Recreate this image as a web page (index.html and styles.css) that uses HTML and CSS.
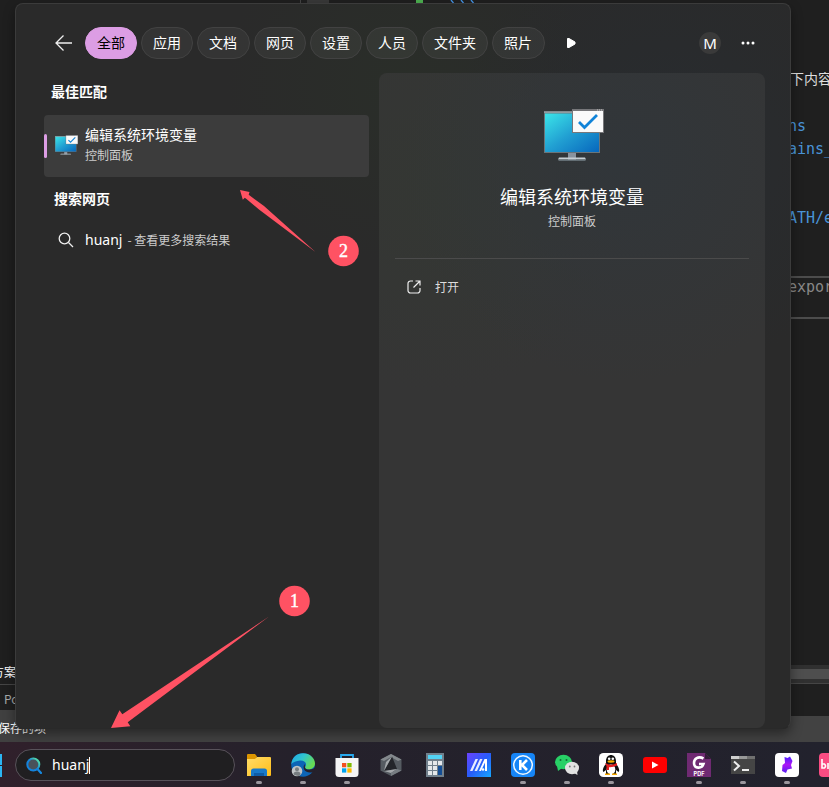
FILE: index.html
```
<!DOCTYPE html>
<html lang="zh-CN">
<head>
<meta charset="utf-8">
<title>Search</title>
<link rel="stylesheet" href="styles.css">
</head>
<body>
<div class="desktop">
  <div class="editor">
    <div class="editor-top"><i class="tick"></i><i class="block"></i><i class="cursor"></i><svg class="fence" viewBox="0 0 26 4"><path d="M1 0l2.500 3M11 0l2.500 3M21 0l2.500 3"/></svg></div>
    <div class="code">
      <p class="plain">下内容</p>
      <p class="blue l1">ns</p>
      <p class="blue l2">ains_</p>
      <p class="blue l3">ATH/e</p>
      <p class="snippet">export</p>
    </div>
    <div class="panel-right"><i class="scroll"></i><i class="rest"></i><i class="foot"></i></div>
    <div class="panel-left">
      <p class="solution">方案</p>
      <p class="ps">Po</p>
      <p class="status">保存的项</p>
    </div>
  </div>

  <main class="search">
    <header class="tabs">
      <svg class="back" viewBox="0 0 18 18"><path d="M17 9H1.500M8.500 1.500L1 9l7.500 7.500"/></svg>
      <span class="tab active">全部</span><span class="tab">应用</span><span class="tab wide">文档</span><span class="tab">网页</span><span class="tab">设置</span><span class="tab">人员</span><span class="tab">文件夹</span><span class="tab wide">照片</span>
      <svg class="play" viewBox="0 0 10 12"><path d="M1.500 1.500v9h1.500L9 7V5L3 1.500z"/></svg>
      <span class="avatar">M</span>
      <svg class="dots" viewBox="0 0 14 4"><circle cx="2" cy="2" r="1.500"/><circle cx="7" cy="2" r="1.500"/><circle cx="12" cy="2" r="1.500"/></svg>
    </header>
    <div class="body">
      <section class="results">
        <h2>最佳匹配</h2>
        <div class="best">
          <svg class="monitor-s" viewBox="0 0 60 52"><use href="#monitor"/></svg>
          <div><p class="name">编辑系统环境变量</p><p class="kind">控制面板</p></div>
        </div>
        <h2 class="web">搜索网页</h2>
        <div class="query">
          <svg viewBox="0 0 16 16"><circle cx="6.500" cy="6.500" r="5.300"/><path d="M10.500 10.500L15 15"/></svg>
          <b>huanj</b><span>- 查看更多搜索结果</span>
        </div>
      </section>
      <section class="detail">
        <svg class="monitor-l" viewBox="0 0 60 52">
          <defs>
            <linearGradient id="screen" x1="0" y1="0" x2="1" y2="1"><stop offset="0" stop-color="#3be5e9"/><stop offset=".5" stop-color="#219fd2"/><stop offset="1" stop-color="#0767bd"/></linearGradient>
            <g id="monitor">
              <path fill="#89939e" d="M24 43h8v8h-8z"/><path fill="#c5ced3" d="M15 48.500h26l1 2H14z"/><path fill="#6f7c82" d="M14.500 50.500h27v1.300h-27z"/>
              <path fill="#6b757a" d="M0 2.500h56V44H0z"/><path fill="#b6c3c8" d="M0 2.500h56v1H0z"/><path fill="url(#screen)" d="M1 4.500h54V43H1z"/>
              <path fill="#77777a" d="M28 0h32v24H28z"/><path fill="#fafafa" d="M29 2h30v21H29z"/><path fill="none" stroke="#1083d8" stroke-width="2.800" d="M35 13l5.500 5.500L53 6"/>
              <path stroke="#ddd" stroke-width=".8" stroke-dasharray="1 1" d="M53 1h6"/>
            </g>
          </defs>
          <use href="#monitor"/>
        </svg>
        <h1>编辑系统环境变量</h1>
        <p class="sub">控制面板</p>
        <hr>
        <div class="open"><svg viewBox="0 0 14 14"><path d="M6 1H3.500A2.500 2.500 0 0 0 1 3.500v7A2.500 2.500 0 0 0 3.500 13h7a2.500 2.500 0 0 0 2.500-2.500V8M8.500 1H13v4.500M13 1L6.500 7.500"/></svg>打开</div>
      </section>
    </div>
  </main>

  <footer class="taskbar">
    <div class="start"><i></i><i></i></div>
    <div class="box">
      <svg viewBox="0 0 16 17"><defs><linearGradient id="ring" x1="0" y1="1" x2="1" y2="0"><stop offset=".5" stop-color="#1383dd"/><stop offset=".85" stop-color="#4fd6ac"/></linearGradient></defs><path d="M11.500 12l3.500 4" stroke="#1688df" stroke-width="2.200" stroke-linecap="round"/><circle cx="7.300" cy="7.500" r="6" fill="#49515a" stroke="url(#ring)" stroke-width="2"/></svg>
      <span>huanj</span><i class="caret"></i>
    </div>
    <div class="apps">
      <div class="app run"><svg viewBox="0 0 24 24"><defs><linearGradient id="fold" x1="0" y1="0" x2="1" y2="1"><stop stop-color="#ffdc69"/><stop offset="1" stop-color="#ffbd18"/></linearGradient></defs><path fill="#dc9500" d="M0 2q0-1 1-1h7l2 2.500-1 2.500H0z"/><path fill="url(#fold)" d="M0 6h8l2-2h13q1 0 1 1v17q0 1-1 1H0z"/><path fill="#1879c9" d="M4 23v-5q0-2.500 2.500-2.500h11Q20 15.500 20 18v5z"/><path fill="#0e5ca6" d="M7 20h10v3H7z"/></svg></div>
      <div class="app run"><svg viewBox="0 0 24 24"><defs><linearGradient id="edge" x1="0" y1="0" x2="1" y2=".5"><stop stop-color="#1ea5e8"/><stop offset=".5" stop-color="#30c6cf"/><stop offset="1" stop-color="#67db52"/></linearGradient></defs><circle cx="12" cy="12" r="11.800" fill="#0c65b6"/><path fill="url(#edge)" d="M.3 11C1 4 6 .2 12 .2c7 0 12 5 12 10.300 0 3.500-3 6-6.500 6-3 0-4-1.500-3-3 2-4-2-6.500-5.500-6C5 8 2 9 .3 11z"/><path fill="#25212b" d="M13.500 11c1 3-1 5.500 5 5.500 2.500 0 4-1 5.500-2v3c-1 1.500-3 2-5 2-5 0-8-4-5.500-8.500z"/><circle cx="6" cy="18" r="5.300" fill="#c1c5c7"/><circle cx="6" cy="16.300" r="2" fill="#777d80"/><path fill="#777d80" d="M2.500 21q0-2.500 3.500-2.500T9.500 21 6 22.800 2.500 21z"/></svg></div>
      <div class="app run"><svg viewBox="0 0 24 24"><path fill="none" stroke="#27a9ee" stroke-width="1.800" d="M6 6V2h12v4"/><path fill="#f5f5f5" d="M.5 5h23v15.500Q23.500 24 20 24H4Q.5 24 .5 20.500z"/><path fill="#f25022" d="M7 10h4.300v4.300H7z"/><path fill="#7fba00" d="M12.300 10h4.300v4.300h-4.300z"/><path fill="#00a4ef" d="M7 15.300h4.300v4.300H7z"/><path fill="#ffb900" d="M12.300 15.300h4.300v4.300h-4.300z"/></svg></div>
      <div class="app"><svg viewBox="0 0 24 24"><path fill="#555b61" d="M12 1l10.500 5.500v11L12 23 1.500 17.500v-11z"/><path fill="#84898d" d="M12 1l10.500 5.500L19 8 12 4 5 8 1.500 6.500z"/><path fill="#24262b" d="M13 3.500L18 16 5 18z"/><path fill="#a4a8ab" d="M13 3.500L5 18l2-9zM5 18l13-2-6 4z"/><path fill="#777d82" d="M18 16l4.500 1.500L12 23v-3z"/></svg></div>
      <div class="app"><svg viewBox="0 0 24 24"><path fill="#71808c" d="M3 0h18v24H3z"/><path fill="#52d3f5" d="M5 2h14v4H5z"/><path fill="#e4e8eb" d="M5 8h4v4H5zM10 8h4v4h-4zM15 8h4v4h-4zM5 13h4v4H5zM10 13h4v4h-4zM5 18h4v4H5zM10 18h4v4h-4z"/><path fill="#134d94" d="M15 13h4v9h-4z"/></svg></div>
      <div class="app"><svg viewBox="0 0 24 24"><defs><linearGradient id="ma" x1="0" y1="0" x2="1" y2="1"><stop stop-color="#6c42ff"/><stop offset=".5" stop-color="#285cf9"/><stop offset="1" stop-color="#16a8ff"/></linearGradient></defs><path fill="url(#ma)" d="M0 0h24v24H0z"/><path fill="#e8ecff" d="M3 18L8.500 6H11L5.500 18zM7.500 18L13 6h2.500L10 18z"/><path fill="#fff" d="M12 18l5.500-12H20v12h-2V9.500L14 18z"/><circle cx="16" cy="16.500" r="1.300" fill="#fff"/></svg></div>
      <div class="app run"><svg viewBox="0 0 24 24"><rect width="24" height="24" rx="4" fill="#1685f7"/><circle cx="12" cy="12" r="9.300" fill="none" stroke="#eff8ff" stroke-width="1.500"/><path fill="none" stroke="#fff" stroke-width="2.600" d="M9.300 7v10M16 7l-5 5 5 5"/></svg></div>
      <div class="app run"><svg viewBox="0 0 24 24"><ellipse cx="8.500" cy="9" rx="8.500" ry="7.200" fill="#28d066"/><path fill="#28d066" d="M2 13l1 5 4-3z"/><circle cx="5.500" cy="7" r="1" fill="#116d35"/><circle cx="11.500" cy="7" r="1" fill="#116d35"/><ellipse cx="17" cy="15" rx="7" ry="6.200" fill="#e2e2e2"/><path fill="#e2e2e2" d="M19 20l3.500 2-.5-4z"/><circle cx="14.800" cy="13.500" r=".9" fill="#777"/><circle cx="19.500" cy="13.500" r=".9" fill="#777"/></svg></div>
      <div class="app run"><svg viewBox="0 0 24 24"><rect width="24" height="24" rx="4.500" fill="#fff"/><path fill="#101010" d="M7 8c0-8 10-8 10 0v3c3 3 4 7 2.500 8L17 17v4H7v-4l-2.500 2C3 18 4 14 7 11z"/><ellipse cx="12" cy="16.500" rx="4.300" ry="5" fill="#fff"/><circle cx="10.200" cy="5.700" r="1.300" fill="#fff"/><circle cx="13.800" cy="5.700" r="1.300" fill="#fff"/><ellipse cx="12" cy="8.500" rx="3.500" ry="1.200" fill="#f6b100"/><path fill="#e22021" d="M6 10q6 3.500 12 0v2.500q-4 2-8 1.700V17H7.500v-4z"/><path fill="#f6a900" d="M6 20.500h5V22H6zM13 20.500h5V22h-5z"/></svg></div>
      <div class="app"><svg viewBox="0 0 24 24"><rect y="4" width="24" height="16" rx="3" fill="#f00"/><path fill="#fff" d="M9 8.500v7l6.500-3.500z"/></svg></div>
      <div class="app run"><svg viewBox="0 0 24 24"><path fill="#6f2a72" d="M0 0h18l6 6v18H0z"/><path fill="#8c478d" d="M24 6L3 18l8-5z"/><path fill="#331b37" d="M18 0v6h6z"/><path fill="none" stroke="#fff" stroke-width="2.600" d="M16.500 5.500C11 2.500 7 6 7 10c0 6 8 6 9.500 1H12"/><text x="12" y="22.500" fill="#fff" font-size="5.500" text-anchor="middle" class="pdf">PDF</text></svg></div>
      <div class="app run"><svg viewBox="0 0 24 24"><path fill="#454545" d="M0 3h24v18H0z"/><path fill="#cfcfcf" d="M0 3h8v3H0z"/><path fill="#989898" d="M8 3h8v3H8z"/><path fill="#707070" d="M16 3h8v3h-8z"/><path fill="none" stroke="#eee" stroke-width="2" d="M3 8.500l5 4.500-5 4.500M11 17h7"/></svg></div>
      <div class="app run"><svg viewBox="0 0 24 24"><defs><linearGradient id="bolt" x1="0" y1="0" x2="0" y2="1"><stop stop-color="#4a20ff"/><stop offset=".5" stop-color="#ac16f5"/><stop offset="1" stop-color="#5420f2"/></linearGradient></defs><rect width="24" height="24" rx="4" fill="#fff"/><path fill="url(#bolt)" d="M9.500 4l3 1L15 3.500l2.500 4.500-1.500 4 1 3.500-4.500 1L11 20l-4-2 .5-6L10 10z"/></svg></div>
      <div class="app last"><svg viewBox="0 0 24 24"><rect width="24" height="24" rx="4" fill="#fa4c82"/><path fill="none" stroke="#fff" stroke-width="1.600" d="M3 6v9h2.500q2-2 0-4H3M9 10v6"/></svg></div>
    </div>
  </footer>

  <svg class="marks" viewBox="0 0 829 787">
    <path d="M240 190L249.500 192l-.8 2.800L264 206 315.500 252 259 209.500 246.500 199l-1.700-1.200-2 2z"/>
    <path d="M111 728l8.500-17.700 2.800 4L269 616.500 127.700 722.300l2.600 4z"/>
    <circle cx="343.500" cy="251" r="15.300"/><circle cx="294.500" cy="601" r="15.300"/>
    <text x="343.500" y="257">2</text><text x="294.500" y="607">1</text>
  </svg>
</div>
</body>
</html>
```
FILE: styles.css
```
* { box-sizing: border-box; }
body { margin: 0; overflow: hidden; font-family: "Noto Sans", "Noto Sans CJK SC", sans-serif; }
p, h1, h2 { margin: 0; }
svg { display: block; flex: none; }
.desktop { position: relative; width: 829px; height: 787px; overflow: hidden; display: grid; grid-template-rows: 742px 45px; background: #1f1f1f; color: #fff; }

.editor { position: relative; overflow: hidden; font-family: "DejaVu Sans Mono", "Noto Sans CJK SC", monospace; font-size: 15px; white-space: nowrap; }
.editor-top { display: flex; height: 4px; padding-left: 300px; overflow: hidden; }
.tick { width: 1px; background: #444; }
.block { width: 22px; margin-left: 6px; background: #383838; }
.cursor { width: 7px; margin-left: 87px; background: #4caf50; }
.fence { width: 26px; height: 4px; margin-left: 27px; fill: none; stroke: #4595e5; stroke-width: 1.3; }
.code { position: absolute; left: 790px; top: 4px; width: 39px; overflow: hidden; height: 316px; line-height: 23px; }
.plain { margin-top: 64px; color: #ddd; font-size: 14px; }
.blue { color: #4a94d8; margin-left: -2px; }
.l1 { margin-top: 24px; }
.l3 { margin-top: 46px; }
.snippet { height: 43px; margin-top: 46px; margin-left: -2px; border: solid #4c4c4c; border-width: 2px 0; color: #888; line-height: 19px; }
.panel-left { position: absolute; left: 0; top: 660px; width: 60px; height: 82px; font: 12px/24px "Noto Sans CJK SC", sans-serif; }
.panel-left p { padding-left: 4px; overflow: hidden; }
.panel-left .solution { border-bottom: 1px solid #454545; padding: 0; text-indent: -8px; background: #1f1f1f; }
.ps { height: 25px; line-height: 28px; color: #aaa; background: #1f1f1f; }
.panel-left .status { height: 32px; line-height: 35px; padding: 0; text-indent: -2px; background: #404040; }
.panel-right { position: absolute; left: 0; right: 0; top: 665px; bottom: 0; display: flex; flex-direction: column; }
.scroll { height: 18px; background: #4e4e4e; border: solid #303030; border-width: 4px 0; }
.rest { height: 33px; border-top: 1px solid #454545; }
.foot { flex: 1; background: #424242; }

.search { position: absolute; left: 15px; top: 3px; width: 776px; height: 726px; border: 1px solid #3b3b3b; border-bottom-color: #292929; border-radius: 8px; box-shadow: 0 5px 12px #0006; background: radial-gradient(circle at 650px 150px, #282c30, transparent 220px), radial-gradient(circle at 390px 80px, #2a2e29, transparent 180px), #2a2a2a; display: flex; flex-direction: column; }
.tabs { display: flex; align-items: center; height: 32px; margin: 23px 35px 0 38px; gap: 4px; }
.back { width: 18px; height: 18px; margin: 0 8px 0 1px; fill: none; stroke: #eee; stroke-width: 1.3; }
.tab { height: 32px; padding: 0 11px; border: 1px solid #424242; border-radius: 16px; background: #ffffff0d; font: 14px/28px "Noto Sans CJK SC", sans-serif; white-space: nowrap; }
.tab.wide { padding-right: 12px; }
.tab.active { background: #dc9de4; border-color: #dc9de4; color: #000; line-height: 29px; }
.play { width: 10px; height: 12px; margin-left: 17px; fill: #fff; stroke: #fff; stroke-width: 1; stroke-linejoin: round; }
.avatar { width: 22px; height: 22px; margin-left: auto; border-radius: 50%; background: #3a3a3a; text-align: center; font: 15px/23px "Noto Sans", sans-serif; }
.dots { width: 14px; height: 4px; margin: 0 0 0 16px; fill: #fff; }
.body { display: grid; grid-template-columns: 325px 386px; gap: 10px; margin: 14px 0 0 28px; height: 655px; }
h2 { font: bold 14px/20px "Noto Sans CJK SC", sans-serif; }
.results h2 { margin: 8px 0 14px 7px; }
.best { position: relative; display: flex; height: 62px; border-radius: 4px; background: #3c3c3c; padding: 9px 0 0 11px; gap: 7px; }
.best::before { content: ""; position: absolute; left: 0; top: 19px; width: 3px; height: 24px; border-radius: 2px; background: #dc9de4; }
.monitor-s { width: 23px; height: 20px; margin-top: 11px; }
.name { font: 14px/21px "Noto Sans CJK SC", sans-serif; }
.kind { font: 12px/20px "Noto Sans CJK SC", sans-serif; color: #ccc; }
.results .web { margin: 11px 0 20px 10px; }
.query { display: flex; align-items: center; height: 24px; margin-left: 14px; }
.query svg { width: 16px; height: 16px; fill: none; stroke: #eee; stroke-width: 1.3; }
.query b { font: 14px/24px "Noto Sans", sans-serif; margin: 0 5px 1px 11px; }
.query span { font: 12px/24px "Noto Sans CJK SC", sans-serif; color: #ccc; }
.detail { border-radius: 8px; background: radial-gradient(circle at 245px 90px, #31363a, transparent 220px), radial-gradient(circle at 60px 120px, #343733, transparent 200px), #353535; padding: 36px 16px 0; text-align: center; }
.monitor-l { width: 60px; height: 52px; margin: 0 auto 0 149px; }
h1 { margin-top: 22px; font: 18px/26px "Noto Sans CJK SC", sans-serif; }
.sub { margin-top: 2px; font: 12px/20px "Noto Sans CJK SC", sans-serif; color: #ccc; }
hr { border: 0; height: 1px; background: #4b4b4b; margin: 27px 0 18px; }
.open { display: flex; align-items: center; gap: 14px; height: 20px; padding-left: 12px; font: 12px/20px "Noto Sans CJK SC", sans-serif; color: #ddd; }
.open svg { width: 14px; height: 14px; fill: none; stroke: #eee; stroke-width: 1.2; }

.taskbar { position: relative; display: flex; align-items: flex-start; background: linear-gradient(90deg, #30202b, #25212b 35%, #22222d); }
.start { display: grid; gap: 1px; width: 2px; margin: 12px 13px 0 0; }
.start i { height: 11px; background: #2bb5f3; }
.box { display: flex; align-items: center; width: 220px; height: 32px; margin-top: 7px; padding-left: 10px; border: 1px solid #58525a; border-radius: 16px; background: #201f21; font: 14px/28px "Noto Sans", sans-serif; }
.box svg { width: 16px; height: 17px; margin-right: 10px; }
.box span { padding-bottom: 1px; }
.caret { width: 1px; height: 17px; background: #fff; }
.apps { display: flex; width: 592px; margin-left: 2px; overflow: hidden; }
.app { flex: 0 0 44px; height: 45px; padding: 11px 10px 0; }
.app svg { width: 24px; height: 24px; }
.run::after { content: ""; display: block; width: 6px; height: 3px; border-radius: 2px; background: #9a969d; margin: 4px auto 0; }
.pdf { font-family: Inter, sans-serif; font-weight: bold; }
.marks { position: absolute; inset: 0; width: 829px; height: 787px; fill: #ff5263; pointer-events: none; }
.marks text { fill: #fff; stroke: #fff; stroke-width: .4; font: 18px "Liberation Serif", serif; text-anchor: middle; }
```
